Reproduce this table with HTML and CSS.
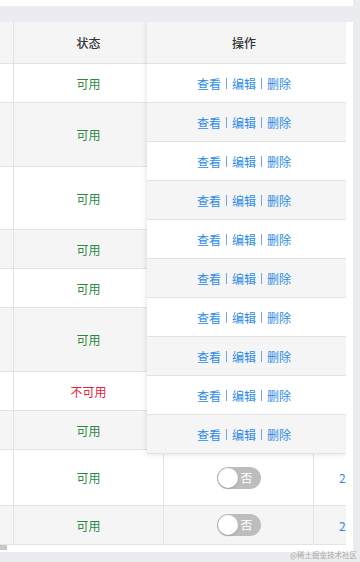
FILE: index.html
```html
<!DOCTYPE html>
<html lang="zh">
<head>
<meta charset="utf-8">
<link rel="stylesheet" href="styles.css">
</head>
<body>
<div class="top-card"></div>
<div class="card">
  <div class="table-wrap">
    <div class="table">
      <div class="row head h42"><div class="cell"></div><div class="cell">状态</div><div class="cell"></div><div class="cell date"></div></div>
      <div class="row h39"><div class="cell"></div><div class="cell ok">可用</div><div class="cell"></div><div class="cell date"></div></div>
      <div class="row h64 stripe"><div class="cell"></div><div class="cell ok">可用</div><div class="cell"></div><div class="cell date"></div></div>
      <div class="row h63"><div class="cell"></div><div class="cell ok">可用</div><div class="cell"></div><div class="cell date"></div></div>
      <div class="row h39 stripe"><div class="cell"></div><div class="cell ok">可用</div><div class="cell"></div><div class="cell date"></div></div>
      <div class="row h39"><div class="cell"></div><div class="cell ok">可用</div><div class="cell"></div><div class="cell date"></div></div>
      <div class="row h64 stripe"><div class="cell"></div><div class="cell ok">可用</div><div class="cell"></div><div class="cell date"></div></div>
      <div class="row h39"><div class="cell"></div><div class="cell bad">不可用</div><div class="cell"></div><div class="cell date"></div></div>
      <div class="row h39 stripe"><div class="cell"></div><div class="cell ok">可用</div><div class="cell"></div><div class="cell date"></div></div>
      <div class="row h56"><div class="cell"></div><div class="cell ok">可用</div><div class="cell"><span class="switch"><span class="knob"></span><span class="sw-text">否</span></span></div><div class="cell date"><a class="link">2021-03-12</a></div></div>
      <div class="row h39 stripe"><div class="cell"></div><div class="cell ok">可用</div><div class="cell"><span class="switch"><span class="knob"></span><span class="sw-text">否</span></span></div><div class="cell date"><a class="link">2021-03-12</a></div></div>
    </div>
    <div class="fixed">
      <div class="f-row head h42">操作</div>
      <div class="f-row h39"><a class="link">查看</a><span class="sep"></span><a class="link">编辑</a><span class="sep"></span><a class="link">删除</a></div>
      <div class="f-row h39 stripe"><a class="link">查看</a><span class="sep"></span><a class="link">编辑</a><span class="sep"></span><a class="link">删除</a></div>
      <div class="f-row h39"><a class="link">查看</a><span class="sep"></span><a class="link">编辑</a><span class="sep"></span><a class="link">删除</a></div>
      <div class="f-row h39 stripe"><a class="link">查看</a><span class="sep"></span><a class="link">编辑</a><span class="sep"></span><a class="link">删除</a></div>
      <div class="f-row h39"><a class="link">查看</a><span class="sep"></span><a class="link">编辑</a><span class="sep"></span><a class="link">删除</a></div>
      <div class="f-row h39 stripe"><a class="link">查看</a><span class="sep"></span><a class="link">编辑</a><span class="sep"></span><a class="link">删除</a></div>
      <div class="f-row h39"><a class="link">查看</a><span class="sep"></span><a class="link">编辑</a><span class="sep"></span><a class="link">删除</a></div>
      <div class="f-row h39 stripe"><a class="link">查看</a><span class="sep"></span><a class="link">编辑</a><span class="sep"></span><a class="link">删除</a></div>
      <div class="f-row h39"><a class="link">查看</a><span class="sep"></span><a class="link">编辑</a><span class="sep"></span><a class="link">删除</a></div>
      <div class="f-row h39 stripe"><a class="link">查看</a><span class="sep"></span><a class="link">编辑</a><span class="sep"></span><a class="link">删除</a></div>
    </div>
  </div>
  <div class="hscroll"><div class="thumb"></div></div>
</div>
<div class="watermark">@稀土掘金技术社区</div>
</body>
</html>
```

FILE: styles.css
```css
* { box-sizing: border-box; }
html, body {
  margin: 0;
  padding: 0;
}
body {
  width: 360px;
  height: 562px;
  overflow: hidden;
  background: #ebecef;
  font-family: "Noto Sans CJK SC", "Noto Sans", sans-serif;
  font-size: 12px;
  color: #333;
  position: relative;
}
.top-card {
  width: 353px;
  height: 6px;
  background: #fff;
}
.card {
  margin-top: 16px;
  width: 353px;
  background: #fff;
  display: flex;
  flex-direction: column;
}
.table-wrap {
  position: relative;
  width: 346px;
  height: 523px;
  overflow: hidden;
}
.table {
  display: flex;
  flex-direction: column;
}
.row {
  display: grid;
  grid-template-columns: 14px 150px 150px 200px;
  border-bottom: 1px solid #e3e3e3;
  background: #fff;
}
.row.stripe { background: #f5f5f5; }
.row.head { background: #f5f5f6; color: #333; font-weight: 500; }
.h42 { height: 42px; }
.h39 { height: 39px; }
.h56 { height: 56px; }
.h63 { height: 63px; }
.h64 { height: 64px; }
.cell {
  display: flex;
  align-items: center;
  justify-content: center;
  border-right: 1px solid #e3e3e3;
  white-space: nowrap;
  overflow: hidden;
}
.cell.date {
  justify-content: flex-start;
  padding-left: 25px;
}
.ok { color: #2a8a42; }
.bad { color: #e8213d; }
.link {
  color: #2d8be6;
  text-decoration: none;
}
.switch {
  position: relative;
  display: inline-flex;
  align-items: center;
  justify-content: flex-end;
  width: 44px;
  height: 22px;
  border-radius: 11px;
  background: #bdbdbd;
  padding-right: 8px;
}
.knob {
  position: absolute;
  left: 1px;
  top: 1px;
  width: 20px;
  height: 20px;
  border-radius: 50%;
  background: #fff;
  box-shadow: 0 1px 2px rgba(0,0,0,0.2);
}
.sw-text {
  color: #fff;
  font-size: 12px;
  line-height: 1;
}
.fixed {
  position: absolute;
  top: 0;
  left: 147px;
  width: 199px;
  background: #fff;
  box-shadow: 0 0 6px rgba(0,0,0,0.14);
  display: flex;
  flex-direction: column;
}
.f-row {
  display: flex;
  align-items: center;
  justify-content: center;
  padding-right: 5px;
  border-bottom: 1px solid #e3e3e3;
  background: #fff;
  white-space: nowrap;
}
.f-row.stripe { background: #f5f5f5; }
.f-row.head { background: #f5f5f6; font-weight: 500; color: #333; }
.sep {
  display: inline-block;
  width: 1px;
  height: 11px;
  margin: 0 5px;
  background: #6ea6df;
}
.hscroll {
  height: 7px;
  background: #fff;
}
.thumb {
  width: 7px;
  height: 5px;
  background: #c9c9c9;
}
.watermark {
  position: absolute;
  right: 3px;
  bottom: 2px;
  font-size: 7.5px;
  color: #a9a9a9;
  white-space: nowrap;
}
```
